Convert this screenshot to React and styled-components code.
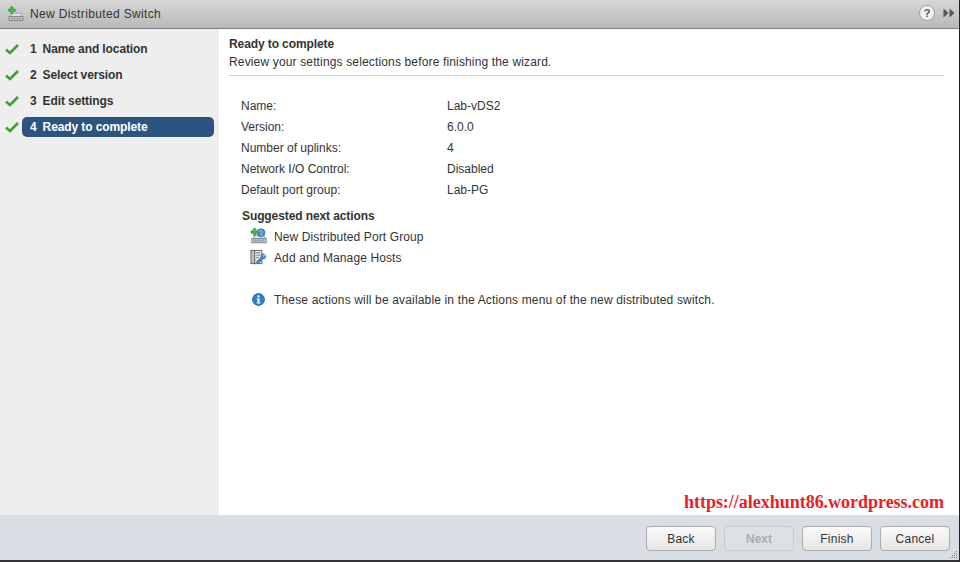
import React from "react";
import styled, { createGlobalStyle } from "styled-components";

const GlobalStyle = createGlobalStyle`
  html, body {
    margin: 0;
    padding: 0;
    background: #fff;
  }
  * {
    box-sizing: border-box;
  }
`;

const Dialog = styled.div`
  width: 960px;
  height: 562px;
  display: flex;
  flex-direction: column;
  overflow: hidden;
  font-family: "Liberation Sans", Arial, sans-serif;
  font-size: 12px;
  color: #333;
  background: #fff;
  border-right: 1px solid #222;
  border-bottom: 2px solid #333;
`;

const TitleBar = styled.div`
  height: 29px;
  flex: none;
  display: flex;
  align-items: center;
  padding: 0 4px 1px 8px;
  background: linear-gradient(#d6d6d6, #b9b9b9);
  border-bottom: 1px solid #7f7f7f;
`;

const Title = styled.div`
  flex: 1;
  margin-left: 6px;
  font-size: 12px;
  letter-spacing: 0.35px;
  color: #333;
`;

const HelpButton = styled.div`
  width: 16px;
  height: 16px;
  margin: 0 8px 2px 0;
  border-radius: 50%;
  border: 1px solid #a0a0a0;
  background: #f2f2f2;
  color: #555;
  font-size: 11px;
  font-weight: bold;
  line-height: 14px;
  text-align: center;
`;

const Collapse = styled.svg`
  margin-bottom: 2px;
`;

const Body = styled.div`
  flex: 1;
  display: flex;
  min-height: 0;
`;

const Sidebar = styled.div`
  width: 219px;
  flex: none;
  display: flex;
  flex-direction: column;
  gap: 6px;
  padding: 10px 5px 0 5px;
  background: #eeeeee;
`;

const Step = styled.div`
  height: 20px;
  display: flex;
  align-items: center;
  gap: 3px;
`;

const StepLabel = styled.div`
  flex: 1;
  height: 20px;
  display: flex;
  align-items: center;
  gap: 6px;
  padding-left: 8px;
  border-radius: 5px;
  font-weight: bold;
  letter-spacing: -0.1px;
  color: ${(p) => (p.$active ? "#fff" : "#333")};
  background: ${(p) => (p.$active ? "#2b5580" : "transparent")};
`;

const Main = styled.div`
  flex: 1;
  padding: 8px 15px 0 10px;
`;

const Heading = styled.div`
  font-weight: bold;
  line-height: 15px;
  letter-spacing: -0.1px;
`;

const Description = styled.div`
  margin-top: 3px;
  padding-bottom: 5px;
  line-height: 15px;
  letter-spacing: 0.15px;
  border-bottom: 1px solid #d4d4d4;
`;

const Summary = styled.div`
  display: grid;
  grid-template-columns: 206px 1fr;
  grid-auto-rows: 21px;
  align-items: center;
  margin: 19px 0 0 12px;
`;

const SectionTitle = styled.div`
  margin: 6px 0 0 13px;
  height: 20px;
  line-height: 21px;
  font-weight: bold;
  letter-spacing: -0.1px;
`;

const ActionRow = styled.div`
  height: 21px;
  display: flex;
  align-items: center;
  gap: 6px;
  padding-left: 21px;
  letter-spacing: 0.11px;
`;

const IconSlot = styled.div`
  width: 18px;
  height: 18px;
  flex: none;
  display: flex;
  align-items: flex-start;
`;

const Note = styled.div`
  display: flex;
  align-items: center;
  gap: 9px;
  margin-top: 21px;
  padding-left: 23px;
  height: 21px;
  letter-spacing: 0.16px;
`;

const Footer = styled.div`
  position: relative;
  height: 45px;
  flex: none;
  display: flex;
  justify-content: flex-end;
  align-items: flex-start;
  gap: 8px;
  padding: 11px 9px 0 0;
  background: #d9dde4;
`;

const Button = styled.div`
  width: 70px;
  height: 25px;
  display: flex;
  align-items: center;
  justify-content: center;
  border-radius: 4px;
  border: 1px solid ${(p) => (p.$disabled ? "#c5cace" : "#ababab")};
  background: ${(p) => (p.$disabled ? "#dde1e6" : "linear-gradient(#fafafa, #e6e6e6)")};
  color: ${(p) => (p.$disabled ? "#a9adb1" : "#333")};
  font-weight: ${(p) => (p.$disabled ? "bold" : "normal")};
  letter-spacing: ${(p) => (p.$disabled ? "0" : "0.25px")};
`;

const Watermark = styled.div`
  position: absolute;
  right: 15px;
  bottom: 47px;
  font-family: "Liberation Serif", "Times New Roman", serif;
  font-size: 18px;
  font-weight: bold;
  letter-spacing: -0.02px;
  color: #ee1c25;
  white-space: nowrap;
`;

const Grip = styled.svg`
  position: absolute;
  right: 1px;
  bottom: 1px;
`;

const Check = () => (
  <svg width="14" height="12" viewBox="0 0 14 12">
    <path d="M1 6.5 L5 10 L13 2" fill="none" stroke="#3aa52e" strokeWidth="2.6" />
  </svg>
);

const SwitchBase = () => (
  <>
    <path d="M3 13 L6 9 H16 L19 13 Z" fill="#e4e8ea" stroke="#8a959a" strokeWidth="1" />
    <rect x="1.5" y="13.5" width="18" height="5" fill="#c4ccd0" stroke="#67757b" strokeWidth="1" />
    <path d="M4 16 H17" stroke="#3d4a50" strokeWidth="1" strokeDasharray="1 1" />
  </>
);

const PlusMark = () => (
  <path d="M3.5 0.5 H6.5 V3.5 H9.5 V6.5 H6.5 V9.5 H3.5 V6.5 H0.5 V3.5 H3.5 Z" fill="#44bb4e" stroke="#2a8a34" strokeWidth="0.7" />
);

const SwitchIcon = () => (
  <svg width="16" height="16" viewBox="0 0 21 20">
    <SwitchBase />
    <PlusMark />
  </svg>
);

const PortGroupIcon = () => (
  <svg width="18" height="16" viewBox="0 0 21 20">
    <SwitchBase />
    <circle cx="13" cy="6" r="5" fill="#3f8fd0" stroke="#2a6aa5" strokeWidth="0.8" />
    <path d="M10 4.5 L13 3 L15 5 L13 7 L14 10" fill="none" stroke="#a9dc9a" strokeWidth="1.2" />
    <PlusMark />
  </svg>
);

const HostsIcon = () => (
  <svg width="17" height="17" viewBox="0 0 18 18">
    <rect x="1" y="1.5" width="4" height="14" fill="#bfc3c6" stroke="#5f6468" />
    <rect x="5" y="1.5" width="7.5" height="14" fill="#e8e9ea" stroke="#5f6468" />
    <path d="M6.5 4 H11 M6.5 6.5 H11 M6.5 9 H9" stroke="#6f7478" />
    <path d="M16.6 6.4 L14.4 8.6 L13.2 7.4 L15.4 5.2 C13 4.6 11.2 6.4 11.6 8.8 L6.6 13.8 L8.4 15.8 L13.6 10.6 C15.8 11 17.4 9 16.6 6.4 Z" fill="#3f8ad0" stroke="#2a6299" strokeWidth="0.6" />
  </svg>
);

const InfoIcon = () => (
  <svg width="13" height="13" viewBox="0 0 13 13">
    <circle cx="6.5" cy="6.5" r="6" fill="#2f7fd0" stroke="#1f62a8" strokeWidth="0.8" />
    <rect x="5.5" y="2.4" width="2" height="2" fill="#fff" />
    <path d="M4.8 5.6 H7.5 V9.4 H8.4 V10.4 H4.8 V9.4 H5.6 V6.6 H4.8 Z" fill="#fff" />
  </svg>
);

const CollapseIcon = () => (
  <Collapse width="12" height="10" viewBox="0 0 12 10">
    <path d="M0.5 0.5 L5.5 5 L0.5 9.5 Z M6.5 0.5 L11.5 5 L6.5 9.5 Z" fill="#555" />
  </Collapse>
);

const steps = ["Name and location", "Select version", "Edit settings", "Ready to complete"];

const summary = [
  ["Name:", "Lab-vDS2"],
  ["Version:", "6.0.0"],
  ["Number of uplinks:", "4"],
  ["Network I/O Control:", "Disabled"],
  ["Default port group:", "Lab-PG"],
];

const App = () => {
  return (
    <Dialog>
      <GlobalStyle />
      <TitleBar>
        <SwitchIcon />
        <Title>New Distributed Switch</Title>
        <HelpButton>?</HelpButton>
        <CollapseIcon />
      </TitleBar>
      <Body>
        <Sidebar>
          {steps.map((s, i) => (
            <Step key={s}>
              <Check />
              <StepLabel $active={i === 3}>
                <span>{i + 1}</span>
                <span>{s}</span>
              </StepLabel>
            </Step>
          ))}
        </Sidebar>
        <Main>
          <Heading>Ready to complete</Heading>
          <Description>Review your settings selections before finishing the wizard.</Description>
          <Summary>
            {summary.map(([k, v]) => (
              <React.Fragment key={k}>
                <div>{k}</div>
                <div>{v}</div>
              </React.Fragment>
            ))}
          </Summary>
          <SectionTitle>Suggested next actions</SectionTitle>
          <ActionRow>
            <IconSlot>
              <PortGroupIcon />
            </IconSlot>
            New Distributed Port Group
          </ActionRow>
          <ActionRow>
            <IconSlot>
              <HostsIcon />
            </IconSlot>
            Add and Manage Hosts
          </ActionRow>
          <Note>
            <InfoIcon />
            These actions will be available in the Actions menu of the new distributed switch.
          </Note>
        </Main>
      </Body>
      <Footer>
        <Watermark>https://alexhunt86.wordpress.com</Watermark>
        <Button>Back</Button>
        <Button $disabled>Next</Button>
        <Button>Finish</Button>
        <Button>Cancel</Button>
        <Grip width="9" height="9" viewBox="0 0 9 9">
          <path d="M7 1h1v1H7z M5 3h1v1H5z M7 3h1v1H7z M3 5h1v1H3z M5 5h1v1H5z M7 5h1v1H7z M1 7h1v1H1z M3 7h1v1H3z M5 7h1v1H5z M7 7h1v1H7z" fill="#777" />
        </Grip>
      </Footer>
    </Dialog>
  );
};

export default App;
